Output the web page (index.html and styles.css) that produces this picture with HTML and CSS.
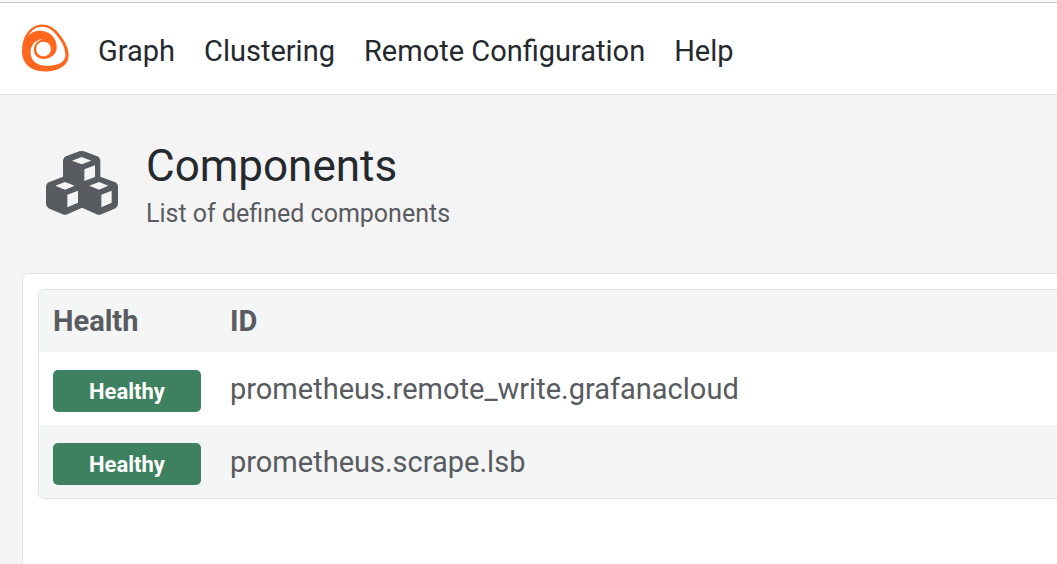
FILE: index.html
```html
<!DOCTYPE html>
<html lang="en">
<head>
<meta charset="utf-8">
<title>Components</title>
<link rel="stylesheet" href="styles.css">
</head>
<body>
<nav class="navbar">
  <a class="logo" href="#" aria-label="Home">
    <svg viewBox="36 28 142 144" aria-hidden="true">
      <path class="logo-body" fill-rule="evenodd" d="M96 29C120 29 138 43 152 62C166 80 177 100 177 122C177 152 147 171 106 171C62 171 36 147 36 110C36 88 40 72 50 57C60 41 76 29 96 29Z
      M53 67C64 52 76 48 90 48C118 48 141 68 141 98C141 120 123 133 101 133C84 133 72 121 72 105C72 89 83 77 101 73C76 74 62 91 62 113C62 137 80 154 108 154C141 154 167 145 167 121C167 102 158 84 145 67C131 48 116 36 96 36C76 36 62 50 53 67Z
      M101 81C88 81 79 90 79 103C79 116 88 125 101 125C114 125 123 116 123 103C123 90 114 81 101 81Z"/>
    </svg>
  </a>
  <ul class="nav-links">
    <li><a href="#">Graph</a></li>
    <li><a href="#">Clustering</a></li>
    <li><a href="#">Remote Configuration</a></li>
    <li><a href="#">Help</a></li>
  </ul>
</nav>
<main class="page">
  <header class="page-header">
    <svg class="cubes" viewBox="50 48 216 192" aria-hidden="true">
      <path fill-rule="evenodd" d="M150 49Q157 47 164 49L202 63Q213 67 213 79V125L256 141Q266 145 266 156V205Q266 216 256 221L216 238Q209 241 202 238L158 218L114 238Q107 241 100 238L60 221Q50 216 50 205V156Q50 145 60 141L101 125V79Q101 67 112 63Z
      M157 66L128 77L157 88L186 77Z M165 103V138L197 126V91Z
      M107 141L78 152L107 164L136 152Z M114 179V217L146 203V167Z
      M209 141L180 152L209 164L237 152Z M216 179V217L247 203V167Z"/>
    </svg>
    <div>
      <h1>Components</h1>
      <p>List of defined components</p>
    </div>
  </header>
  <section class="card">
    <div class="table-frame">
      <table>
        <thead>
          <tr><th class="health" scope="col">Health</th><th scope="col">ID</th></tr>
        </thead>
        <tbody>
          <tr><td><span class="badge">Healthy</span></td><td>prometheus.remote_write.grafanacloud</td></tr>
          <tr><td><span class="badge">Healthy</span></td><td>prometheus.scrape.lsb</td></tr>
        </tbody>
      </table>
    </div>
  </section>
</main>
</body>
</html>
```
FILE: styles.css
```css
* {
  box-sizing: border-box;
}

body {
  display: flex;
  flex-direction: column;
  min-height: 100vh;
  margin: 0;
  background: #f4f4f4;
  color: #24292e;
  font-family: Roboto, sans-serif;
  overflow-x: hidden;
}

.navbar {
  display: flex;
  align-items: center;
  gap: 29px;
  padding: 22px;
  border-bottom: 1px solid #e4e5e6;
  background: #fff;
}

.navbar::before {
  content: "";
  position: absolute;
  inset: 0 0 auto;
  height: 2px;
  border-bottom: 1px solid #c8c8c8;
  background: #f8f8f8;
}

.logo {
  display: flex;
  padding: 2px 0 0;
}

.logo svg {
  width: 47px;
  height: 48px;
}

.logo-body {
  fill: #ff671d;
}

.nav-links {
  display: flex;
  gap: 29px;
  margin: 0;
  padding: 8px 0 0;
  list-style: none;
}

.nav-links a {
  display: block;
  color: inherit;
  font-size: 29px;
  line-height: 42px;
  text-decoration: none;
}

.page {
  display: flex;
  flex: 1;
  flex-direction: column;
  padding-left: 22px;
}

.page-header {
  display: flex;
  align-items: center;
  gap: 28px;
  padding: 44px 24px 38px;
}

.cubes {
  width: 72px;
  height: 64px;
  margin-bottom: 8px;
  fill: #585b60;
}

h1 {
  margin: 0;
  font-size: 44px;
  font-weight: 400;
  line-height: 54px;
}

.page-header p {
  margin: 0;
  color: #585b60;
  font-size: 25px;
  line-height: 42px;
}

.card {
  flex: 1;
  padding: 15px 0 15px 15px;
  border: 1px solid #e4e5e6;
  border-width: 1px 0 0 1px;
  border-radius: 6px 0 0;
  background: #fff;
}

.table-frame {
  overflow: hidden;
  border: 1px solid #e1e4e5;
  border-right: 0;
  border-radius: 6px 0 0 6px;
}

table {
  width: 100%;
  border-collapse: collapse;
  color: #585b60;
  font-size: 29px;
  line-height: 44px;
  text-align: left;
}

th,
td {
  height: 73px;
  padding: 0 15px 0 14px;
}

th {
  height: 62px;
  font-weight: 700;
}

.health {
  width: 177px;
}

thead tr,
tbody tr:nth-child(even) {
  background: #f4f5f5;
}

td {
  vertical-align: middle;
}

.badge {
  display: block;
  margin-top: 4px;
  padding-top: 2px;
  border-radius: 5px;
  background: #3d8160;
  color: #fff;
  font-size: 22px;
  font-weight: 700;
  line-height: 40px;
  text-align: center;
}
```
